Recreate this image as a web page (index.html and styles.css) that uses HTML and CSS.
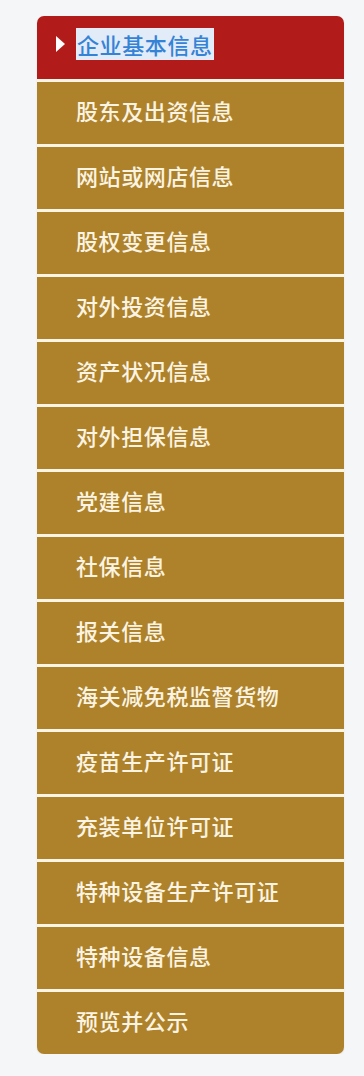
FILE: index.html
```html
<!DOCTYPE html>
<html lang="zh">
<head>
<meta charset="utf-8">
<link rel="stylesheet" href="styles.css">
</head>
<body>
<nav class="menu">
  <div class="item active"><span class="arrow"></span><span class="sel">企业基本信息</span></div>
  <div class="item">股东及出资信息</div>
  <div class="item">网站或网店信息</div>
  <div class="item">股权变更信息</div>
  <div class="item">对外投资信息</div>
  <div class="item">资产状况信息</div>
  <div class="item">对外担保信息</div>
  <div class="item">党建信息</div>
  <div class="item">社保信息</div>
  <div class="item">报关信息</div>
  <div class="item">海关减免税监督货物</div>
  <div class="item">疫苗生产许可证</div>
  <div class="item">充装单位许可证</div>
  <div class="item">特种设备生产许可证</div>
  <div class="item">特种设备信息</div>
  <div class="item">预览并公示</div>
</nav>
</body>
</html>
```
FILE: styles.css
```css
html, body {
  margin: 0;
  padding: 0;
  background: #f4f6f8;
}
body {
  padding: 16px 20px 0 37px;
  font-family: "Noto Sans CJK SC", "Noto Sans", sans-serif;
}
.menu {
  width: 307px;
  display: flex;
  flex-direction: column;
  gap: 3px;
  background: #fbf5e6;
  border-radius: 7px;
  overflow: hidden;
  box-shadow: 0 1px 2px rgba(0,0,0,0.08);
}
.item {
  height: 62px;
  display: flex;
  align-items: center;
  padding-left: 39px;
  padding-bottom: 6px;
  background: #ad822b;
  color: #fcf4e2;
  font-size: 22px;
  font-weight: 500;
  letter-spacing: 0.6px;
  box-sizing: border-box;
}
.item.active {
  background: #b11c1b;
  padding-left: 19px;
  height: 63px;
  padding-bottom: 8px;
}
.arrow {
  width: 0;
  height: 0;
  border-top: 8px solid transparent;
  border-bottom: 8px solid transparent;
  border-left: 9px solid #ffffff;
  margin-right: 11px;
}
.sel {
  background: #e2ecf8;
  color: #3583d6;
  line-height: 32px;
  padding: 0 1px 0 1px;
}
```
